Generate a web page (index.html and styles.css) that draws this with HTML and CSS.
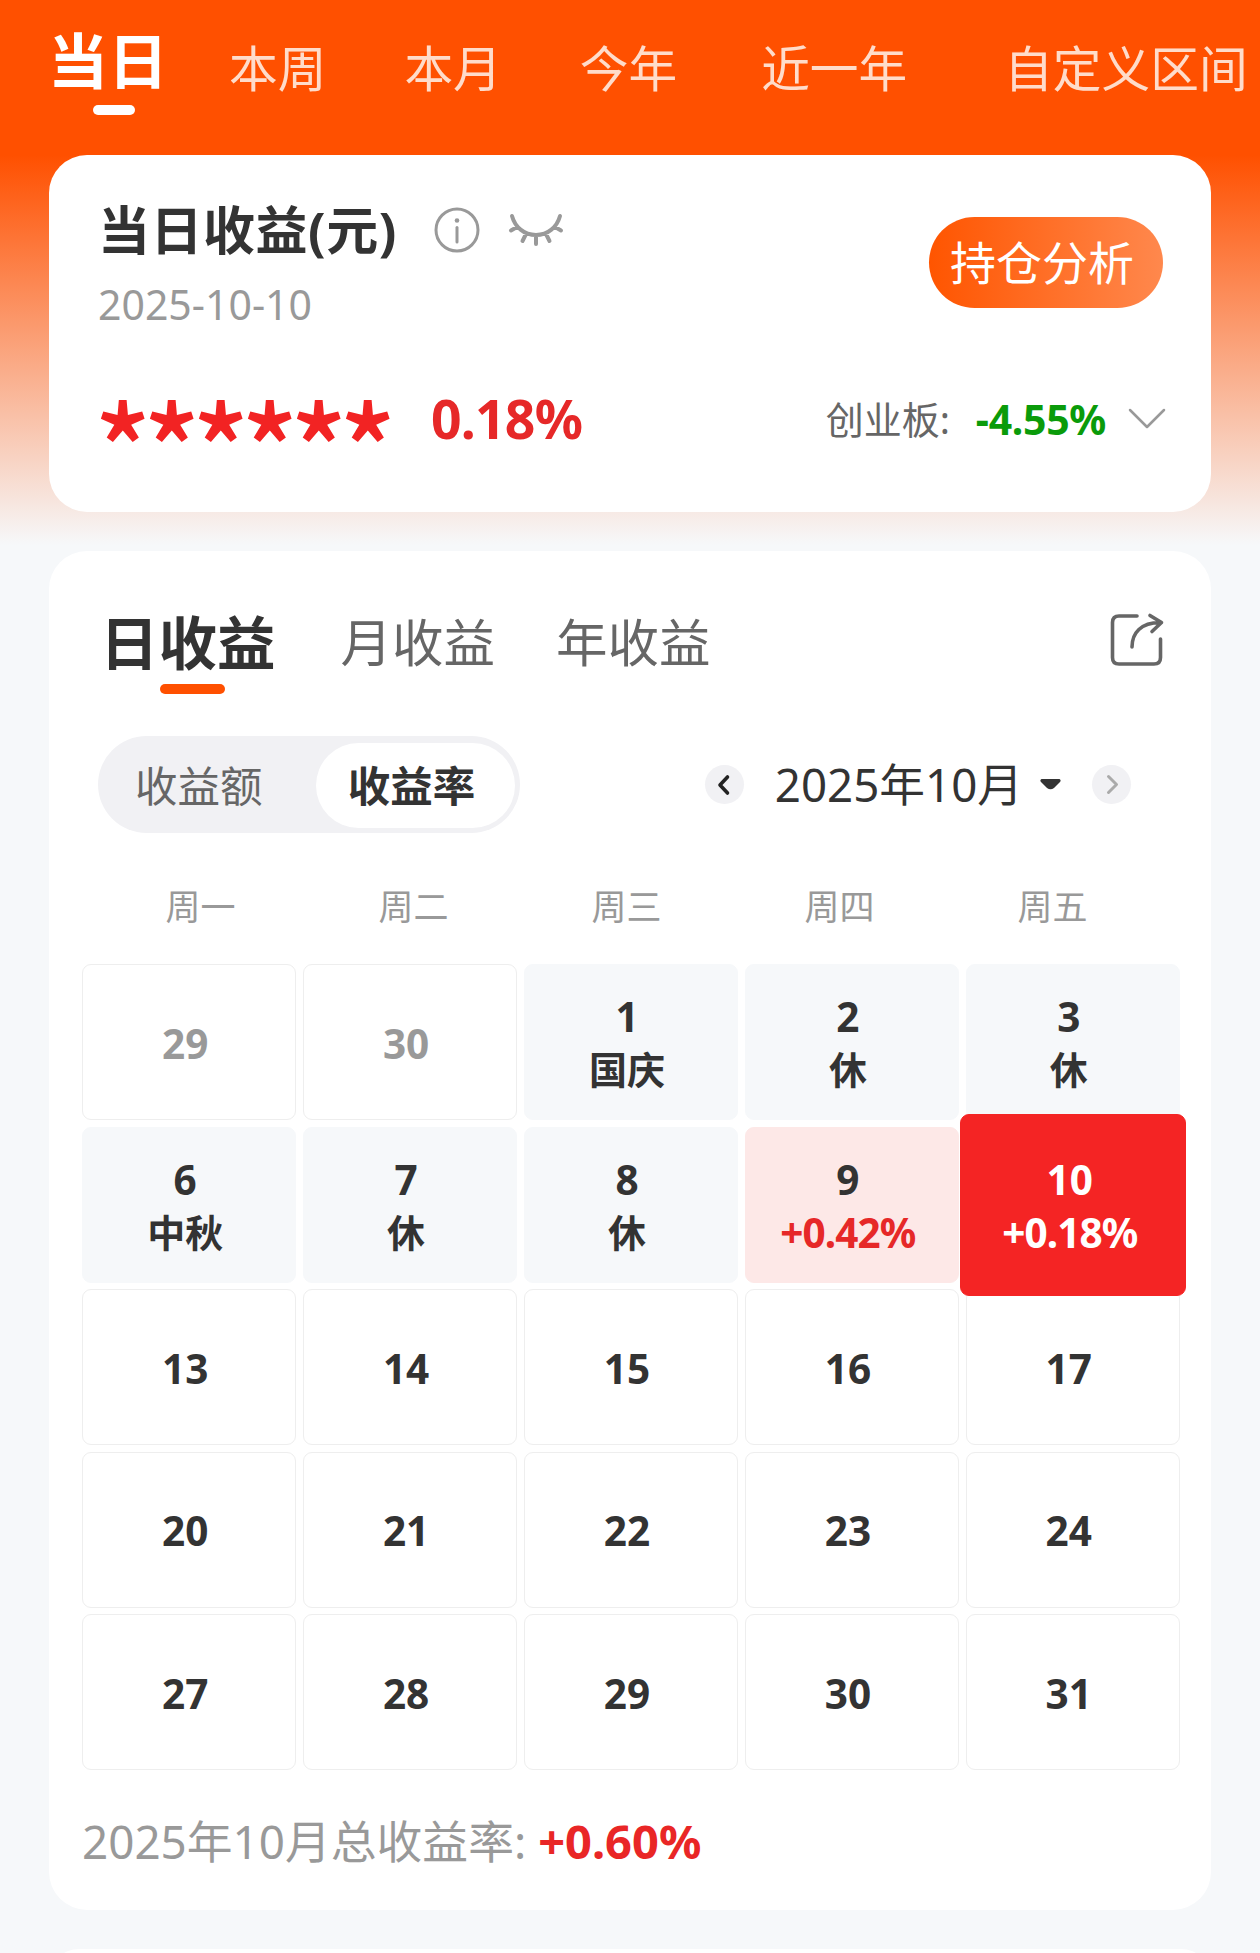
FILE: index.html
```html
<!DOCTYPE html>
<html lang="zh-CN">

<head>
    <meta charset="UTF-8">
    <meta name="viewport" content="width=device-width, initial-scale=1.0">
    <title>当日收益</title>
    <link rel="stylesheet" href="styles.css">
</head>

<body>

    <nav class="tabs">
        <a class="tab active">当日</a>
        <a class="tab">本周</a>
        <a class="tab">本月</a>
        <a class="tab">今年</a>
        <a class="tab year">近一年</a>
        <a class="tab custom">自定义区间</a>
    </nav>

    <section class="card summary">
        <div class="summary-top">
            <div>
                <div class="title">
                    <h1>当日收益(元)</h1>
                    <svg class="icon-info" viewBox="0 0 46 46" width="46" height="46">
                        <circle cx="23" cy="23" r="21" />
                        <path d="M23 20.500V35" />
                        <circle class="dot" cx="23" cy="13.500" r="2.300" />
                    </svg>
                    <svg class="icon-eye" viewBox="0 0 56 34" width="56" height="34">
                        <path d="M4 4C7 15 16 23 28 23S49 15 52 4M9 15L3 18.500M18 22L14.500 29M28 23V32M38 22L41.500 29M47 15L53 18.500" />
                    </svg>
                </div>
                <p class="date">2025-10-10</p>
            </div>
            <button type="button" class="btn">持仓分析</button>
        </div>
        <div class="summary-bottom">
            <span class="stars">******</span>
            <span class="rate">0.18%</span>
            <span class="index-name">创业板:</span>
            <span class="index-rate">-4.55%</span>
            <svg class="icon-down" viewBox="0 0 38 22" width="38" height="22">
                <path d="M2 2L19 19L36 2" />
            </svg>
        </div>
    </section>

    <section class="card detail">
        <div class="detail-tabs">
            <a class="detail-tab active">日收益</a>
            <a class="detail-tab">月收益</a>
            <a class="detail-tab">年收益</a>
            <svg class="icon-share" viewBox="0 0 54 54" width="54" height="54">
                <path d="M27 3H9Q2.500 3 2.500 9.500V44.500Q2.500 51 9 51H44Q50.500 51 50.500 44.500V26" />
                <path d="M22 34C22 20 31 9.500 50 9.500M40 2.500L51.500 9.500L42 18.500" />
            </svg>
        </div>

        <div class="controls">
            <div class="switch">
                <span class="switch-item">收益额</span>
                <span class="switch-item on">收益率</span>
            </div>
            <div class="month">
                <span class="arrow">
                    <svg viewBox="0 0 39 39" width="39" height="39"><path d="M22.500 12L15 20L22.500 28" /></svg>
                </span>
                <span class="month-name">2025年10月</span>
                <svg class="caret" viewBox="0 0 21 11" width="21" height="11"><path d="M1.500 0H19.500Q21.500 1 20 3L14 9Q10.500 11.500 7 9L1 3Q-.5 1 1.500 0Z" /></svg>
                <span class="arrow off">
                    <svg viewBox="0 0 39 39" width="39" height="39"><path d="M16.500 11.500L24.500 19.500L16.500 27.500" /></svg>
                </span>
            </div>
        </div>

        <div class="week">
            <span>周一</span>
            <span>周二</span>
            <span>周三</span>
            <span>周四</span>
            <span>周五</span>
        </div>

        <div class="calendar">
            <div class="day other">29</div>
            <div class="day other">30</div>
            <div class="day rest">1<span>国庆</span></div>
            <div class="day rest">2<span>休</span></div>
            <div class="day rest">3<span>休</span></div>

            <div class="day rest">6<span>中秋</span></div>
            <div class="day rest">7<span>休</span></div>
            <div class="day rest">8<span>休</span></div>
            <div class="day up">9<span class="num">+0.42%</span></div>
            <div class="day selected">10<span class="num">+0.18%</span></div>

            <div class="day">13</div>
            <div class="day">14</div>
            <div class="day">15</div>
            <div class="day">16</div>
            <div class="day">17</div>

            <div class="day">20</div>
            <div class="day">21</div>
            <div class="day">22</div>
            <div class="day">23</div>
            <div class="day">24</div>

            <div class="day">27</div>
            <div class="day">28</div>
            <div class="day">29</div>
            <div class="day">30</div>
            <div class="day">31</div>
        </div>

        <p class="total">2025年10月总收益率: <b>+0.60%</b></p>
    </section>

    <section class="card next"></section>

</body>

</html>
```
FILE: styles.css
```css
* {
    box-sizing: border-box;
}

body {
    margin: 0;
    height: 1953px;
    overflow: hidden;
    font-family: "Noto Sans", "Noto Sans CJK SC", sans-serif;
    color: #333;
    background: #f6f8fa linear-gradient(#ff5000 155px, #f6f8fa 545px) no-repeat;
}

h1,
p {
    margin: 0;
}

svg {
    display: block;
    fill: none;
    stroke-linecap: round;
    stroke-linejoin: round;
}

/* top tabs */
.tabs {
    display: flex;
    height: 155px;
    padding-left: 48px;
    white-space: nowrap;
}

.tab {
    margin-right: 78px;
    font-size: 48.7px;
    line-height: 137px;
    color: #ffdcca;
}

.tab.active {
    position: relative;
    margin-right: 61px;
    font-size: 60px;
    line-height: 122px;
    font-weight: bold;
    color: #fff;
}

.tab.active::after {
    content: "";
    position: absolute;
    left: 45px;
    top: 105px;
    width: 42px;
    height: 10px;
    border-radius: 5px;
    background: #fff;
}

.tab.year {
    margin-left: 6px;
    margin-right: 97px;
}

.tab.custom {
    margin-right: 0;
}

.card {
    margin: 0 49px;
    border-radius: 38px;
    background: #fff;
}

/* summary */
.summary {
    height: 357px;
    padding: 44px 48px 0 49px;
}

.summary-top {
    display: flex;
    justify-content: space-between;
    height: 157px;
}

.title {
    display: flex;
    align-items: center;
    height: 62px;
}

h1 {
    font-size: 52px;
    line-height: 62px;
    letter-spacing: 0.5px;
}

.icon-info {
    margin-left: 37px;
    stroke: #999;
    stroke-width: 3;
}

.icon-info .dot {
    fill: #999;
    stroke: none;
}

.icon-eye {
    margin-left: 28px;
    margin-bottom: 3px;
    stroke: #999;
    stroke-width: 4;
}

.date {
    font-size: 41px;
    line-height: 86px;
    color: #999;
}

.btn {
    width: 234px;
    height: 91px;
    margin-top: 18px;
    padding: 0 8px 0 0;
    border: none;
    border-radius: 46px;
    font-family: inherit;
    font-size: 46px;
    line-height: 91px;
    color: #fff;
    background: linear-gradient(90deg, #ff5500, #ff884d);
}

.summary-bottom {
    display: flex;
    align-items: center;
    height: 126px;
    margin-right: -3px;
    line-height: 126px;
}

.stars {
    width: 337px;
    height: 126px;
    margin-left: -4px;
    font-family: "Noto Sans CJK SC", sans-serif;
    font-size: 119px;
    line-height: 174px;
    letter-spacing: -8.6px;
    font-weight: 500;
    color: #f22323;
}

.rate {
    font-size: 53.5px;
    letter-spacing: -0.8px;
    font-weight: bold;
    color: #e62828;
}

.index-name {
    margin-left: auto;
    font-size: 38px;
    color: #666;
}

.index-rate {
    margin: 0 22px 0 26px;
    font-size: 41px;
    letter-spacing: -0.3px;
    font-weight: bold;
    color: #0a9b0a;
}

.icon-down {
    stroke: #999;
    stroke-width: 2.5;
}

/* detail */
.detail {
    height: 1359px;
    margin-top: 39px;
    padding: 50px 33px 0;
}

.detail-tabs {
    display: flex;
    height: 135px;
    padding: 0 14px 0 18px;
    line-height: 82px;
}

.detail-tab {
    margin-right: 61px;
    font-size: 51.5px;
    color: #666;
}

.detail-tab.active {
    position: relative;
    margin-right: 65px;
    font-size: 58.5px;
    font-weight: bold;
    color: #333;
}

.detail-tab.active::after {
    content: "";
    position: absolute;
    left: 60px;
    top: 83px;
    width: 65px;
    height: 10px;
    border-radius: 5px;
    background: #ff5000;
}

.icon-share {
    margin: 12px 0 0 auto;
    stroke: #666;
    stroke-width: 3.6;
}

.controls {
    display: flex;
    justify-content: space-between;
    height: 97px;
    padding: 0 47px 0 16px;
}

.switch {
    display: flex;
    width: 422px;
    padding: 7px 5px 5px 0;
    border-radius: 49px;
    background: #f1f1f4;
}

.switch-item {
    flex: 1;
    padding-left: 37px;
    font-size: 42.5px;
    line-height: 86px;
    color: #666;
}

.switch-item.on {
    flex: 0 0 199px;
    padding: 0 8px 0 0;
    border-radius: 43px;
    text-align: center;
    font-weight: bold;
    color: #333;
    background: #fff;
}

.month {
    display: flex;
    align-items: center;
}

.month-name {
    margin: 0 17px 0 31px;
    font-size: 45.7px;
    line-height: 99px;
}

.caret {
    margin-right: 31px;
    fill: #333;
}

.arrow {
    border-radius: 50%;
    background: #f1f1f4;
    stroke: #222;
    stroke-width: 3.6;
}

.arrow.off {
    stroke: #aaa;
    stroke-width: 3;
}

.week {
    display: grid;
    grid-template-columns: repeat(5, 213px);
    height: 131px;
    padding-left: 12px;
    font-size: 35px;
    line-height: 148px;
    text-align: center;
    color: #999;
}

.calendar {
    display: grid;
    grid-template-columns: repeat(5, 1fr);
    grid-auto-rows: 156px;
    gap: 6.5px;
    width: 1098px;
}

.day {
    display: flex;
    flex-direction: column;
    align-items: center;
    justify-content: center;
    padding: 2px 8px 0 0;
    border: 1px solid #eee;
    border-radius: 9px;
    font-size: 40.5px;
    line-height: 53px;
    font-weight: bold;
}

.day span {
    font-size: 38px;
}

.day .num {
    font-size: 40.5px;
    letter-spacing: -0.9px;
}

.day.other {
    color: #999;
}

.day.rest {
    border-color: #f6f8fa;
    background: #f6f8fa;
}

.day.up {
    border-color: #fde8e7;
    background: #fde8e7;
}

.day.up .num {
    color: #e62828;
}

/* the picked day is larger than its cell */
.day.selected {
    z-index: 1;
    margin: -13px -6px;
    padding-right: 6px;
    border-color: #f42424;
    color: #fff;
    background: #f42424;
}

.total {
    font-size: 45.8px;
    line-height: 142px;
    color: #999;
}

.total b {
    font-size: 47px;
    color: #e92626;
}

.next {
    height: 60px;
    margin-top: 39px;
}
```
